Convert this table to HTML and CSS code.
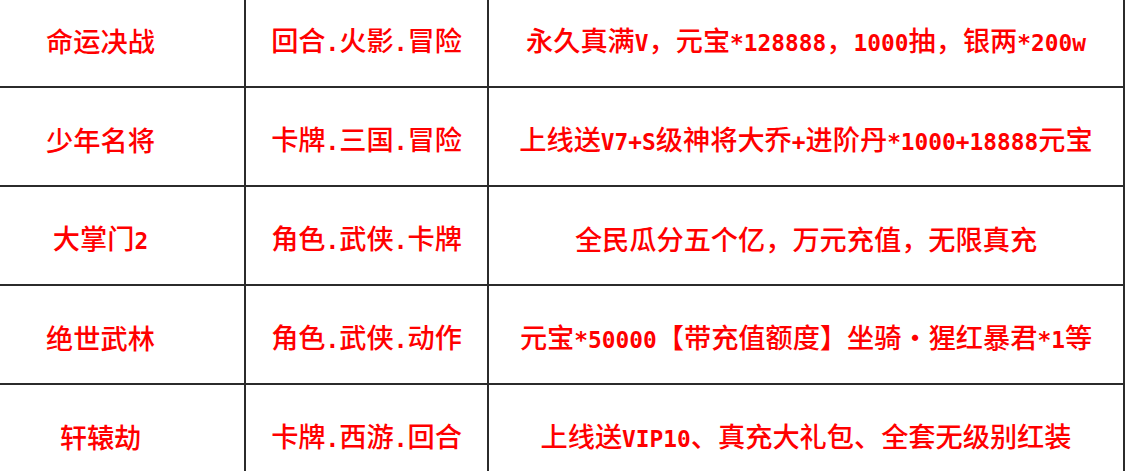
FILE: index.html
```html
<!DOCTYPE html>
<html lang="zh-CN">
<head>
<meta charset="utf-8">
<title>游戏列表</title>
<link rel="stylesheet" href="styles.css">
</head>
<body>
<div class="table">
  <div class="cell c1"><span class="txt">命运决战</span></div>
  <div class="cell c2"><span class="txt">回合<span class="lat">.</span>火影<span class="lat">.</span>冒险</span></div>
  <div class="cell c3"><span class="txt">永久真满<span class="lat">V</span>，元宝<span class="lat">*128888</span>，<span class="lat">1000</span>抽，银两<span class="lat">*200w</span></span></div>

  <div class="cell c1"><span class="txt">少年名将</span></div>
  <div class="cell c2"><span class="txt">卡牌<span class="lat">.</span>三国<span class="lat">.</span>冒险</span></div>
  <div class="cell c3"><span class="txt">上线送<span class="lat">V7+S</span>级神将大乔<span class="lat">+</span>进阶丹<span class="lat">*1000+18888</span>元宝</span></div>

  <div class="cell c1"><span class="txt">大掌门<span class="lat">2</span></span></div>
  <div class="cell c2"><span class="txt">角色<span class="lat">.</span>武侠<span class="lat">.</span>卡牌</span></div>
  <div class="cell c3"><span class="txt">全民瓜分五个亿，万元充值，无限真充</span></div>

  <div class="cell c1"><span class="txt">绝世武林</span></div>
  <div class="cell c2"><span class="txt">角色<span class="lat">.</span>武侠<span class="lat">.</span>动作</span></div>
  <div class="cell c3"><span class="txt">元宝<span class="lat">*50000</span>【带充值额度】坐骑<span class="dot">·</span>猩红暴君<span class="lat">*1</span>等</span></div>

  <div class="cell c1"><span class="txt">轩辕劫</span></div>
  <div class="cell c2"><span class="txt">卡牌<span class="lat">.</span>西游<span class="lat">.</span>回合</span></div>
  <div class="cell c3"><span class="txt">上线送<span class="lat">VIP10</span>、真充大礼包、全套无级别红装</span></div>
</div>
</body>
</html>
```

FILE: styles.css
```css
html, body {
  margin: 0;
  padding: 0;
  background: #ffffff;
  overflow: hidden;
}

.table {
  display: grid;
  grid-template-columns: 289px 243px 636px;
  grid-auto-rows: 99px;
  margin: -11px 0 0 -43px;
  width: max-content;
  font-family: "Noto Sans CJK SC", "Liberation Sans", sans-serif;
  font-size: 27.2px;
  font-weight: 500;
  color: #f00;
}

.cell {
  display: flex;
  align-items: center;
  justify-content: center;
  border-right: 2px solid #2b2b2b;
  border-bottom: 2px solid #2b2b2b;
  padding-top: 5px;
  box-sizing: border-box;
  white-space: nowrap;
}

.txt {
  display: block;
  line-height: 1.2;
}

.lat {
  font-family: "DejaVu Sans Mono", "Liberation Mono", monospace;
  font-size: 0.84em;
  font-weight: 700;
}

.dot {
  display: inline-block;
  width: 1em;
  text-align: center;
}
```
